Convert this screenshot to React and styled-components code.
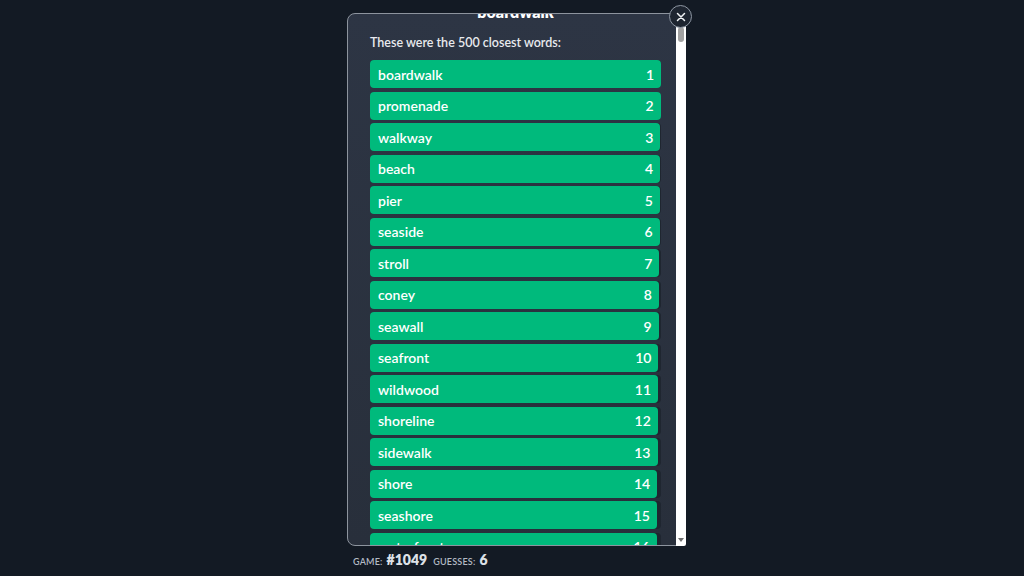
import React, { useLayoutEffect, useRef } from "react";
import styled, { createGlobalStyle } from "styled-components";

const GlobalStyle = createGlobalStyle`
  html, body {
    margin: 0;
    padding: 0;
    background: #131a24;
    font-family: "Lato", "Noto Sans", sans-serif;
    color: #f3f4f6;
  }
`;

const Page = styled.main`
  min-height: 100vh;
  display: flex;
  justify-content: center;
  padding-top: 13px;
  box-sizing: border-box;
`;

const Column = styled.div`
  width: 330px;
  display: flex;
  flex-direction: column;
`;

const ModalFrame = styled.div`
  position: relative;
  width: 339px;
`;

const ModalBox = styled.div`
  height: 533px;
  box-sizing: border-box;
  overflow-y: scroll;
  border: 1px solid #8d949e;
  border-radius: 8px;
  background: linear-gradient(180deg, #2d3544 0%, #282f3b 100%);
  scrollbar-width: none;
  &::-webkit-scrollbar {
    display: none;
  }
`;

const ModalContent = styled.div`
  padding: 24px 24px 20px 22px;
`;

const Title = styled.h2`
  margin: 0 0 10px;
  font-size: 16px;
  line-height: 24px;
  font-weight: 800;
  text-align: center;
  color: #ffffff;
`;

const Subtitle = styled.p`
  margin: 0 0 8px;
  font-size: 12.5px;
  line-height: 18px;
  font-weight: 600;
  color: #e8eaee;
`;

const WordList = styled.ol`
  list-style: none;
  margin: 0;
  padding: 0;
  display: flex;
  flex-direction: column;
  gap: 3.5px;
`;

const WordRow = styled.li`
  height: 28px;
  border-radius: 4px;
  background: #1f2630;
  display: flex;
`;

const WordBar = styled.div`
  height: 100%;
  border-radius: 4px;
  background: #00ba7c;
  display: flex;
  align-items: center;
  justify-content: space-between;
  padding: 0 7px 0 8px;
  box-sizing: border-box;
  font-size: 14px;
  font-weight: 600;
  color: #ffffff;
`;

const MoreRows = styled.div`
  height: ${(p) => p.$count * 31.5}px;
`;

/* scrollbar drawn over the right edge of the modal */
const ScrollTrack = styled.div`
  position: absolute;
  top: 1px;
  bottom: 0;
  right: 0;
  width: 10px;
  background: #ffffff;
  border-bottom-right-radius: 2px;
`;

const ScrollThumb = styled.div`
  position: absolute;
  top: 13px;
  left: 2px;
  width: 6px;
  height: 15px;
  border-radius: 3px;
  background: #a1a1a1;
`;

const ScrollArrow = styled.div`
  position: absolute;
  bottom: 4px;
  left: 2px;
  width: 0;
  height: 0;
  border-left: 3px solid transparent;
  border-right: 3px solid transparent;
  border-top: 4px solid #6e6e6e;
`;

const CloseButton = styled.button`
  position: absolute;
  top: -8px;
  right: -6px;
  width: 23px;
  height: 23px;
  padding: 0;
  border-radius: 50%;
  border: 1.5px solid #8e97a3;
  background: #1e2530;
  display: flex;
  align-items: center;
  justify-content: center;
  cursor: pointer;
`;

const Footer = styled.div`
  margin-top: 6px;
  padding-left: 6px;
  display: flex;
  align-items: baseline;
  line-height: 16px;
`;

const FooterLabel = styled.span`
  font-size: 9px;
  font-weight: 600;
  text-transform: uppercase;
  letter-spacing: 0.2px;
  color: #b3bac5;
  margin-right: 4px;
`;

const FooterValue = styled.span`
  font-size: 14px;
  font-weight: 800;
  color: #dde1e7;
  margin-right: 6px;
`;

const words = [
  "boardwalk",
  "promenade",
  "walkway",
  "beach",
  "pier",
  "seaside",
  "stroll",
  "coney",
  "seawall",
  "seafront",
  "wildwood",
  "shoreline",
  "sidewalk",
  "shore",
  "seashore",
  "waterfront",
];

const TOTAL = 500;

const App = () => {
  const boxRef = useRef(null);

  useLayoutEffect(() => {
    if (boxRef.current) boxRef.current.scrollTop = 38;
  }, []);

  return (
    <>
      <GlobalStyle />
      <Page>
        <Column>
          <ModalFrame>
            <ModalBox ref={boxRef}>
              <ModalContent>
                <Title>boardwalk</Title>
                <Subtitle>These were the {TOTAL} closest words:</Subtitle>
                <WordList>
                  {words.map((word, i) => (
                    <WordRow key={word}>
                      <WordBar style={{ width: `${100 - i * 0.1}%` }}>
                        <span>{word}</span>
                        <span>{i + 1}</span>
                      </WordBar>
                    </WordRow>
                  ))}
                </WordList>
                <MoreRows $count={TOTAL - words.length} />
              </ModalContent>
            </ModalBox>
            <ScrollTrack>
              <ScrollThumb />
              <ScrollArrow />
            </ScrollTrack>
            <CloseButton aria-label="close">
              <svg width="10" height="10" viewBox="0 0 10 10">
                <path
                  d="M1.5 1.5 L8.5 8.5 M8.5 1.5 L1.5 8.5"
                  stroke="#f1f3f5"
                  strokeWidth="1.5"
                  strokeLinecap="round"
                />
              </svg>
            </CloseButton>
          </ModalFrame>
          <Footer>
            <FooterLabel>Game:</FooterLabel>
            <FooterValue>#1049</FooterValue>
            <FooterLabel>Guesses:</FooterLabel>
            <FooterValue>6</FooterValue>
          </Footer>
        </Column>
      </Page>
    </>
  );
};

export default App;
